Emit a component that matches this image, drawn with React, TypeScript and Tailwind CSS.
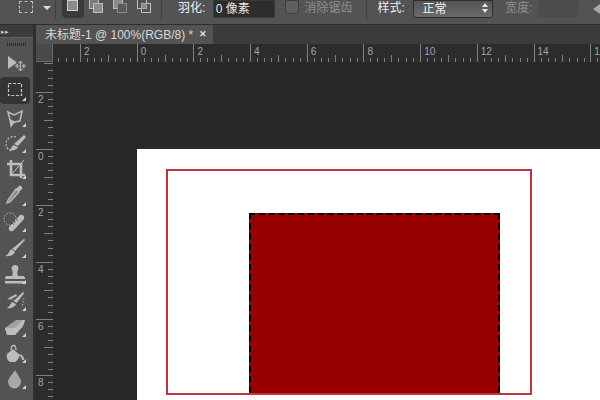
import React from 'react'

const RULER_STEP = 56.7

const ToolSvg = ({ children }: { children: React.ReactNode }) => (
  <svg width="24" height="24" viewBox="0 0 24 24" fill="#bcbcbc" stroke="none" className="mr-[3px]">{children}</svg>
)

const tools: { name: string; icon: React.ReactNode; more?: boolean; active?: boolean }[] = [
  {
    name: 'move',
    icon: (
      <ToolSvg>
        <path d="M6 4l0 13 9-6.500z" />
        <path d="M18.500 9v10M13.500 14h10M18.500 9l-2 2h4zM18.500 19l-2-2h4zM13.500 14l2-2v4zM23.500 14l-2-2v4z" stroke="#bcbcbc" strokeWidth="0.800" fill="none" />
      </ToolSvg>
    ),
  },
  {
    name: 'marquee',
    active: true,
    more: true,
    icon: (
      <ToolSvg>
        <rect x="6.500" y="5.500" width="13" height="12" fill="none" stroke="#c8c8c8" strokeWidth="1.200" strokeDasharray="3 1.600" />
      </ToolSvg>
    ),
  },
  {
    name: 'lasso',
    more: true,
    icon: (
      <ToolSvg>
        <path d="M6 7l6 3 8-4-2 10-6 1-3 4-1-6z" fill="none" stroke="#bcbcbc" strokeWidth="1.500" />
        <path d="M8 14l6 3-5 3z" fill="#bcbcbc" />
      </ToolSvg>
    ),
  },
  {
    name: 'quick-select',
    more: true,
    icon: (
      <ToolSvg>
        <path d="M14 6a7 7 0 1 0-5 14" fill="none" stroke="#bcbcbc" strokeWidth="1.200" strokeDasharray="2 1.500" />
        <path d="M22 4l2 2-8 9-4-2z" />
        <path d="M11 14l5 2c-1 3-6 4-9 3 2-1 3-3 4-5z" />
      </ToolSvg>
    ),
  },
  {
    name: 'crop',
    more: true,
    icon: (
      <ToolSvg>
        <path d="M9 3v15h14M5 7h14v14" fill="none" stroke="#bcbcbc" strokeWidth="2.600" />
        <path d="M9 18L22 3" stroke="#bcbcbc" strokeWidth="1" />
      </ToolSvg>
    ),
  },
  {
    name: 'eyedropper',
    more: true,
    icon: (
      <ToolSvg>
        <path d="M17 3c2-1 4 1 3 3l-3 3-3-3z" />
        <path d="M14 6l3 3-9 10-3 1 1-3z" fill="#8a8a8a" stroke="#bcbcbc" strokeWidth="1.300" />
      </ToolSvg>
    ),
  },
  {
    name: 'healing',
    more: true,
    icon: (
      <ToolSvg>
        <path d="M7 17L18 5a3 3 0 0 1 4 4L11 21a3 3 0 0 1-4-4z" />
        <path d="M12 11l1.500 1.500M14 9l1.500 1.500M10 13l1.500 1.500" stroke="#535353" strokeWidth="1.200" />
        <circle cx="8" cy="9" r="6" fill="none" stroke="#bcbcbc" strokeWidth="1" strokeDasharray="1.500 1.500" />
      </ToolSvg>
    ),
  },
  {
    name: 'brush',
    more: true,
    icon: (
      <ToolSvg>
        <path d="M22 3l1 1-10 11-3-2z" />
        <path d="M9 13l4 3c-1 3-6 5-10 4 3-1 4-4 6-7z" />
      </ToolSvg>
    ),
  },
  {
    name: 'stamp',
    more: true,
    icon: (
      <ToolSvg>
        <path d="M13 3c3 0 4 3 3 5-1 2-1 4 0 6h5c1 0 2 1 2 2v1H3v-1c0-1 1-2 2-2h5c1-2 1-4 0-6-1-2 0-5 3-5z" />
        <rect x="3" y="19" width="20" height="2.500" />
      </ToolSvg>
    ),
  },
  {
    name: 'history-brush',
    more: true,
    icon: (
      <ToolSvg>
        <path d="M21 4l1.500 1-8 10-3-2z" />
        <path d="M10 14l4 2c-1 3-6 5-9 4 2-1 3-3 5-6z" />
        <path d="M5 11l9-5 1 2-6 3 3 1z" />
        <path d="M22 10l-2 9" stroke="#bcbcbc" strokeWidth="1" strokeDasharray="1.500 1.500" />
      </ToolSvg>
    ),
  },
  {
    name: 'eraser',
    more: true,
    icon: (
      <ToolSvg>
        <path d="M3 13l11-8h9l-2 6-8 9H5z" fill="#a0a0a0" />
        <path d="M3 13h10l8-8h2l-2 6-8 9H5z" fill="#bcbcbc" />
      </ToolSvg>
    ),
  },
  {
    name: 'bucket',
    more: true,
    icon: (
      <ToolSvg>
        <path d="M9 9c0-6 5-6 5 0" fill="none" stroke="#bcbcbc" strokeWidth="1.300" />
        <path d="M5 13l6-5 7 6c-1 3-3 6-5 7H9c-3 0-5-4-4-8z" />
        <path d="M18 13c3 1 4 3 4 6h-2c0-2-1-3-2-4z" />
      </ToolSvg>
    ),
  },
  {
    name: 'blur',
    more: true,
    icon: (
      <ToolSvg>
        <path d="M13 3c2 4 6 8 6 12a6.500 6.500 0 0 1-13 0c0-4 5-8 7-12z" fill="#a8a8a8" />
      </ToolSvg>
    ),
  },
]

const ToolButton = ({ icon, more, active }: { icon: React.ReactNode; more?: boolean; active?: boolean }) => (
  <div className={`relative flex h-[26.25px] w-[30px] shrink-0 items-center justify-center rounded-sm ${active ? 'bg-[#343434]' : ''}`}>
    {icon}
    {more && (
      <span className="absolute bottom-[3px] right-[4px] h-0 w-0 border-b-[4px] border-l-[4px] border-b-[#d0d0d0] border-l-transparent" />
    )}
  </div>
)

const ModeIcon = ({ variant }: { variant: number }) => (
  <svg width="18" height="18" viewBox="0 0 18 18" fill="none">
    {variant === 0 && <rect x="3.500" y="0.500" width="10" height="10" fill="#8a8a8a" stroke="#cfcfcf" />}
    {variant === 1 && (
      <>
        <rect x="1.500" y="-0.500" width="9" height="9" fill="#7c7c7c" stroke="#bdbdbd" />
        <rect x="5.500" y="3.500" width="9" height="9" fill="#8c8c8c" stroke="#bdbdbd" />
      </>
    )}
    {variant === 2 && (
      <>
        <rect x="1.500" y="-0.500" width="9" height="9" fill="#8c8c8c" stroke="#bdbdbd" />
        <rect x="5.500" y="3.500" width="9" height="9" fill="#5a5a5a" stroke="#8a8a8a" />
      </>
    )}
    {variant === 3 && (
      <>
        <rect x="1.500" y="-0.500" width="9" height="9" stroke="#bdbdbd" />
        <rect x="5.500" y="3.500" width="9" height="9" stroke="#bdbdbd" />
        <rect x="5.500" y="3.500" width="5" height="5" fill="#8c8c8c" />
      </>
    )}
  </svg>
)

const OptionsBar = () => (
  <div className="flex h-[25px] shrink-0 items-start border-b border-[#2e2e2e] bg-[#535353] text-[12px] leading-[17px]">
    <div className="ml-[19px] mt-px h-[12px] w-[14px] border border-dashed border-[#bdbdbd]" />
    <span className="ml-[10px] mt-[6px] h-0 w-0 border-x-[4px] border-t-[4px] border-x-transparent border-t-[#e0e0e0]" />
    <div className="ml-[4px] h-[20px] w-px bg-[#3f3f3f]" />
    <div className="ml-[6px] flex h-[18px] w-[22px] justify-center rounded-b-sm bg-[#3a3a3a]">
      <ModeIcon variant={0} />
    </div>
    <div className="ml-[4px] flex gap-[6px]">
      <ModeIcon variant={1} />
      <ModeIcon variant={2} />
      <ModeIcon variant={3} />
    </div>
    <div className="ml-[7px] h-[20px] w-px bg-[#3f3f3f]" />
    <span className="ml-[16px] w-[35px] whitespace-nowrap text-[#f0f0f0]">羽化:</span>
    <div className="h-[18px] w-[62px] whitespace-nowrap border border-[#3a3a3a] bg-[#2c2c2c] pl-[2px] text-[#e8e8e8]">0 像素</div>
    <div className="ml-[10px] h-[14px] w-[14px] rounded-b-sm border border-[#3e3e3e] bg-[#5f5f5f]" />
    <span className="ml-[6px] whitespace-nowrap text-[#8e8e8e]">消除锯齿</span>
    <div className="ml-[13px] h-[20px] w-px bg-[#3f3f3f]" />
    <span className="ml-[11px] w-[36px] whitespace-nowrap text-[#f0f0f0]">样式:</span>
    <div className="flex h-[18px] w-[80px] items-start justify-between rounded-b-[3px] border border-[#2f2f2f] bg-gradient-to-b from-[#555555] to-[#6a6a6a] pl-[8px] pr-[4px] text-[#f2f2f2]">
      <span>正常</span>
      <span className="mt-[2px] flex flex-col gap-[2px]">
        <span className="h-0 w-0 border-x-[3px] border-b-[4px] border-x-transparent border-b-[#e8e8e8]" />
        <span className="h-0 w-0 border-x-[3px] border-t-[4px] border-x-transparent border-t-[#e8e8e8]" />
      </span>
    </div>
    <span className="ml-[12px] w-[34px] whitespace-nowrap text-[#8e8e8e]">宽度:</span>
    <div className="h-[17px] w-[39px] border border-[#4a4a4a] bg-[#4d4d4d]" />
    <span className="ml-[15px] mt-[4px] h-0 w-0 border-y-[5px] border-r-[7px] border-y-transparent border-r-[#a8a8a8]" />
  </div>
)

const Toolbar = () => (
  <div className="flex w-[33px] shrink-0 flex-col overflow-hidden bg-[#535353]">
    <div className="flex h-[12px] shrink-0 items-center bg-[#3c3c3c] pl-px text-[7px] leading-none text-[#c8c8c8]">
      <span>▸▸</span>
    </div>
    <div className="flex h-[14px] shrink-0 items-center justify-center border-t border-[#5f5f5f]">
      <div className="h-[3px] w-[19px] bg-[repeating-linear-gradient(90deg,#2c2c2c_0,#2c2c2c_1px,transparent_1px,transparent_2px)]" />
    </div>
    <div className="flex flex-col">
      {tools.map((t) => (
        <ToolButton key={t.name} icon={t.icon} more={t.more} active={t.active} />
      ))}
    </div>
  </div>
)

const HorizontalTicks = () => (
  <svg width={RULER_STEP} height="18" className="shrink-0" stroke="#808080" strokeWidth="1">
    <path d="M0.500 0V18" />
    {[1, 2, 3, 4, 5, 6, 7].map((i) => {
      const x = Math.round((i * RULER_STEP) / 8) + 0.5
      return <path key={i} d={`M${x} ${i === 4 ? 11 : 14}V18`} />
    })}
  </svg>
)

const VerticalTicks = () => (
  <svg width="17" height={RULER_STEP} className="shrink-0" stroke="#808080" strokeWidth="1">
    <path d="M0 0.500H17" />
    {[1, 2, 3, 4, 5, 6, 7].map((i) => {
      const y = Math.round((i * RULER_STEP) / 8) + 0.5
      return <path key={i} d={`M${i === 4 ? 8 : 12} ${y}H17`} />
    })}
  </svg>
)

const TopRuler = () => (
  <div className="flex h-[18px] shrink-0 overflow-hidden bg-[#2c2c2c]">
    <div className="relative flex h-[18px] w-[27px] shrink-0 justify-end overflow-hidden">
      <HorizontalTicks />
    </div>
    {['2', '0', '2', '4', '6', '8', '10', '12', '14', '16'].map((label, i) => (
      <div key={i} className="relative h-[18px] w-[56.7px] shrink-0">
        <HorizontalTicks />
        <span className="absolute left-[4px] top-[2px] text-[10px] leading-[12px] text-[#a4a4a4]">{label}</span>
      </div>
    ))}
  </div>
)

const LeftRuler = () => (
  <div className="flex w-[17px] shrink-0 flex-col overflow-hidden bg-[#2c2c2c]">
    <div className="flex h-[30px] shrink-0 items-end overflow-hidden">
      <VerticalTicks />
    </div>
    {['2', '0', '2', '4', '6', '8'].map((label, i) => (
      <div key={i} className="relative h-[56.7px] w-[17px] shrink-0">
        <VerticalTicks />
        <span className="absolute left-[2px] top-[2px] text-[10px] leading-[12px] text-[#a4a4a4]">{label}</span>
      </div>
    ))}
  </div>
)

const Canvas = () => (
  <div className="flex min-w-0 flex-1 overflow-hidden bg-[#282828] pl-[84px] pt-[87px]">
    <div className="flex-1 overflow-hidden bg-white pl-[29px] pt-[20px]">
      <div className="h-[226px] w-[366px] overflow-hidden border-2 border-[#c4323f] pl-[81px] pt-[42px]">
        <div className="h-[200px] w-[251px] border-x-2 border-t-2 border-dashed border-black bg-[#990000]" />
      </div>
    </div>
  </div>
)

export default function App() {
  return (
    <div className="flex h-[400px] w-[600px] flex-col overflow-hidden bg-[#3c3c3c] font-['Liberation_Sans','Noto_Sans_CJK_SC',sans-serif]">
      <OptionsBar />
      <div className="flex min-h-0 flex-1">
        <Toolbar />
        <div className="w-[3px] shrink-0 bg-[#2f2f2f]" />
        <div className="flex min-w-0 flex-1 flex-col">
          <div className="flex h-[19px] shrink-0 bg-[#3c3c3c]">
            <div className="flex w-[177px] items-center justify-between bg-[#535353] pl-[9px] pr-[6px] text-[12px] leading-none text-[#d8d8d8]">
              <span className="whitespace-nowrap">未标题-1 @ 100%(RGB/8) *</span>
              <span className="text-[9px] font-bold text-[#e0e0e0]">✕</span>
            </div>
          </div>
          <div className="flex h-[18px] shrink-0">
            <div className="w-[17px] shrink-0 border-r border-b border-[#6a6a6a] bg-[#4a4a4a]" />
            <div className="min-w-0 flex-1 overflow-hidden">
              <TopRuler />
            </div>
          </div>
          <div className="flex min-h-0 flex-1">
            <LeftRuler />
            <Canvas />
          </div>
        </div>
      </div>
    </div>
  )
}
